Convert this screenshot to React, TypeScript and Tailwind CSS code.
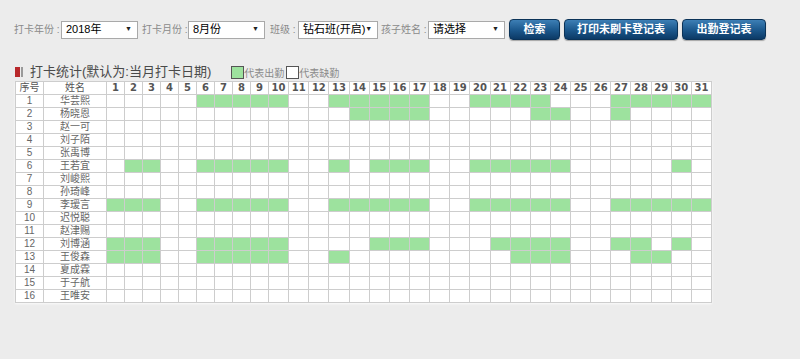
import React from "react";

const FONT = '"Liberation Sans", "Noto Sans CJK SC", sans-serif';

const students: { name: string; days: number[] }[] = [
  { name: "华芸熙", days: [6, 7, 8, 9, 10, 13, 14, 15, 16, 17, 20, 21, 22, 23, 27, 28, 29, 30, 31] },
  { name: "杨晓恩", days: [14, 15, 16, 17, 23, 24, 27] },
  { name: "赵一可", days: [] },
  { name: "刘子陌", days: [] },
  { name: "张禹博", days: [] },
  { name: "王若宜", days: [2, 3, 6, 7, 8, 9, 10, 13, 15, 16, 17, 20, 21, 22, 23, 24, 30] },
  { name: "刘峻熙", days: [] },
  { name: "孙琦峰", days: [] },
  { name: "李瑷言", days: [1, 2, 3, 6, 7, 8, 9, 10, 13, 14, 15, 16, 17, 20, 21, 22, 23, 24, 27, 28, 29, 30, 31] },
  { name: "迟悦聪", days: [] },
  { name: "赵津赐", days: [] },
  { name: "刘博涵", days: [1, 2, 3, 6, 7, 8, 9, 10, 15, 16, 17, 21, 22, 23, 24, 27, 28, 30] },
  { name: "王俊森", days: [1, 2, 3, 6, 7, 8, 9, 10, 13, 22, 23, 24, 28, 29] },
  { name: "夏成霖", days: [] },
  { name: "于子航", days: [] },
  { name: "王唯安", days: [] },
];

const days = Array.from({ length: 31 }, (_, i) => i + 1);

function Select({ value, width }: { value: string; width: string }) {
  return (
    <div className={`${width} shrink-0 h-[18px] bg-white border border-[#a9a9a9] flex items-center justify-between pl-[4px] pr-[5px] text-[11px] text-black whitespace-nowrap`}>
      <span>{value}</span>
      <span className="text-[7px] text-[#222]">▼</span>
    </div>
  );
}

function Btn({ label, width }: { label: string; width: string }) {
  return (
    <div
      className={`${width} shrink-0 h-[21px] rounded-[4px] border border-[#0b3358] bg-gradient-to-b from-[#3d7fb5] via-[#1d5a8f] to-[#0c3a66] flex items-center justify-center text-white text-[11px] font-bold whitespace-nowrap shadow-[0_1px_1px_rgba(0,0,0,0.3)]`}
    >
      {label}
    </div>
  );
}

function Label({ text, width }: { text: string; width: string }) {
  return <span className={`${width} shrink-0`}>{text}</span>;
}

export default function App() {
  return (
    <div className="w-[800px] h-[359px] bg-[#ececec] overflow-hidden" style={{ fontFamily: FONT }}>
      {/* filter bar */}
      <div className="flex items-center h-[21px] mt-[19px] pl-[14px] text-[10px] text-[#8a8a8a] whitespace-nowrap">
        <Label text="打卡年份 :" width="w-[47px]" />
        <Select value="2018年" width="w-[77px]" />
        <span className="w-[4px]" />
        <Label text="打卡月份 :" width="w-[46px]" />
        <Select value="8月份" width="w-[77px]" />
        <span className="w-[5px]" />
        <Label text="班级 :" width="w-[28px]" />
        <Select value="钻石班(开启)" width="w-[80px]" />
        <span className="w-[3px]" />
        <Label text="孩子姓名 :" width="w-[47px]" />
        <Select value="请选择" width="w-[77px]" />
        <div className="ml-[4px] flex gap-[4px]">
          <Btn label="检索" width="w-[51px]" />
          <Btn label="打印未刷卡登记表" width="w-[114px]" />
          <Btn label="出勤登记表" width="w-[84px]" />
        </div>
      </div>

      {/* title + legend */}
      <div className="flex items-end pl-[15px] mt-[22px] h-[19px] whitespace-nowrap">
        <div className="flex items-center h-[19px]">
          <span className="w-[5px] h-[10px] bg-[#b8282b]" />
          <span className="w-[2px] h-[10px] bg-[#999] ml-[1px]" />
          <span className="ml-[7px] text-[13px] text-[#4a4a4a] leading-none">打卡统计(默认为:当月打卡日期)</span>
        </div>
        <div className="flex items-end ml-[20px] text-[10px] text-[#8a8a8a] leading-none pb-[2px]">
          <span className="w-[13px] h-[13px] bg-[#9de29e] border border-[#555]" />
          <span>代表出勤</span>
          <span className="w-[13px] h-[13px] bg-white border border-[#555] ml-[2px]" />
          <span>代表缺勤</span>
        </div>
      </div>

      {/* table */}
      <div
        className="ml-[15px] w-[697px] grid gap-[1px] bg-[#cdcdcd] border border-[#cdcdcd] grid-cols-[27px_62px_repeat(9,17px)_repeat(22,1fr)] auto-rows-[12px] shadow-[0_1px_2px_rgba(255,255,255,0.8)]"
      >
        <div className="bg-white text-[10px] text-[#555] flex items-center justify-center leading-none">序号</div>
        <div className="bg-white text-[10px] text-[#555] flex items-center justify-center leading-none">姓名</div>
        {days.map((d) => (
          <div
            key={d}
            className="bg-white text-[10px] font-bold text-[#555] flex items-center justify-center leading-none"
            style={{ fontFamily: '"DejaVu Sans", sans-serif' }}
          >
            {d}
          </div>
        ))}
        {students.map((s, i) => (
          <React.Fragment key={s.name}>
            <div className="bg-white text-[10px] text-[#666] flex items-center justify-center leading-none">{i + 1}</div>
            <div className="bg-white text-[10px] text-[#666] flex items-center justify-center leading-none">{s.name}</div>
            {days.map((d) => (
              <div key={d} className={s.days.includes(d) ? "bg-[#9de29e]" : "bg-white"} />
            ))}
          </React.Fragment>
        ))}
      </div>
    </div>
  );
}
